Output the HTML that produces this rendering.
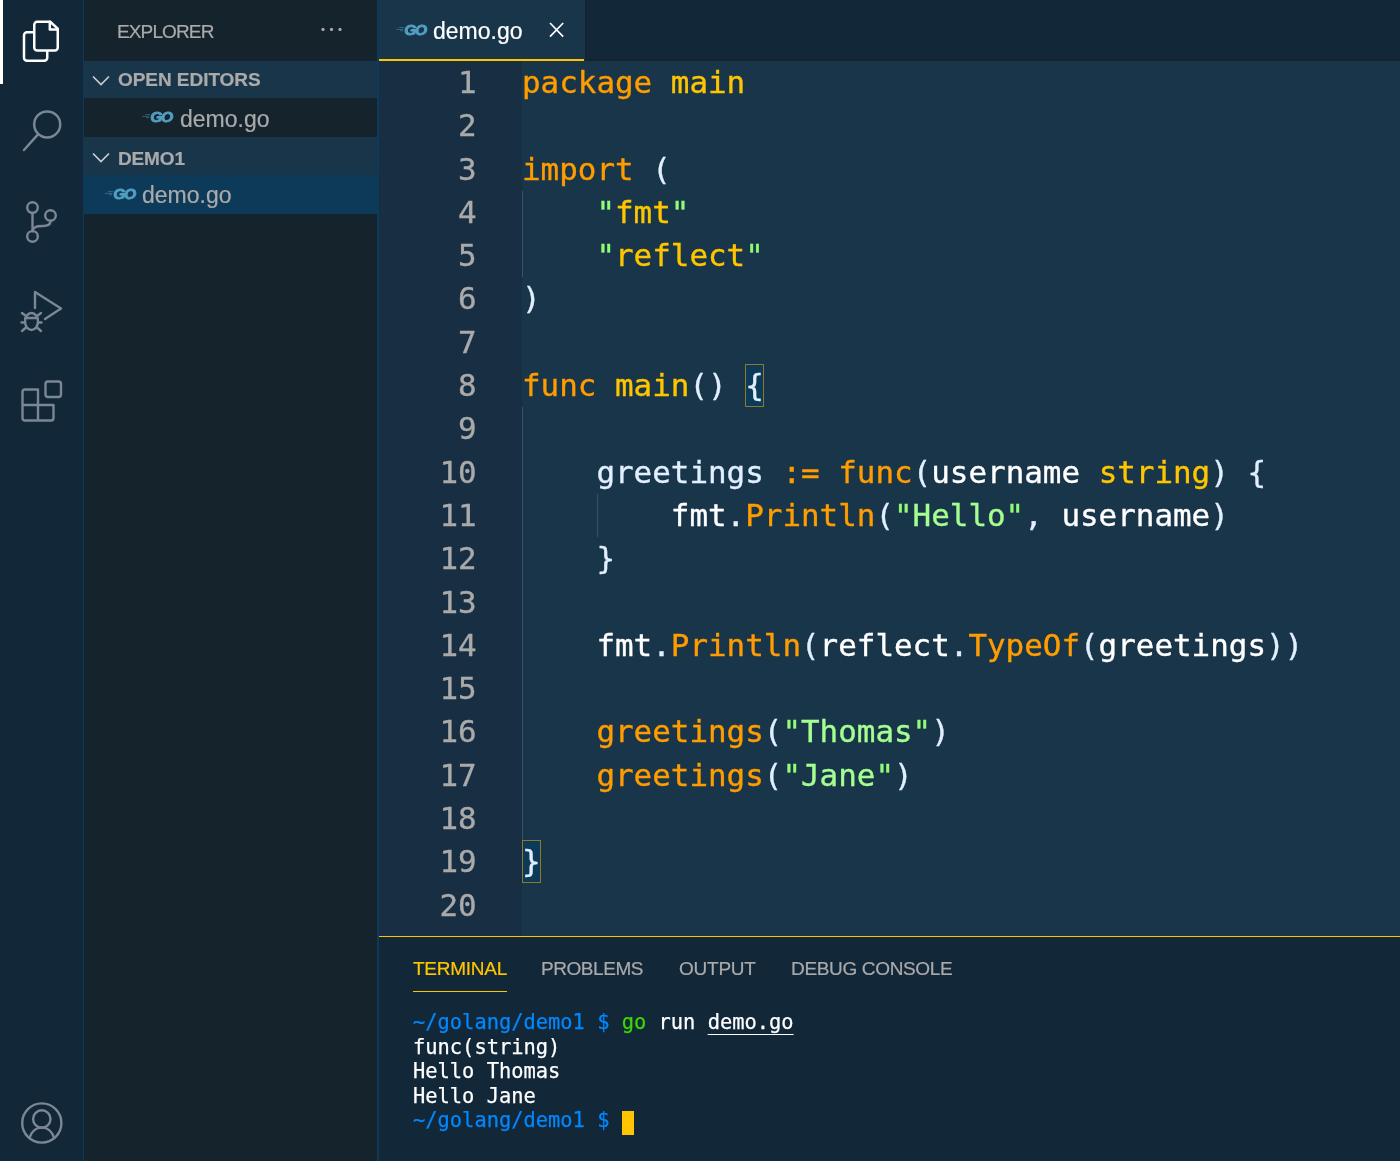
<!DOCTYPE html>
<html lang="en">
<head>
<meta charset="utf-8">
<title>demo.go — demo1</title>
<style>
*{box-sizing:border-box;margin:0;padding:0}
html,body{width:1400px;height:1161px;overflow:hidden;background:#193549}
body{position:relative;font-family:"Liberation Sans",sans-serif;color:#aaa;-webkit-font-smoothing:antialiased}
.abs{position:absolute}
/* activity bar */
#activity{position:absolute;left:0;top:0;width:84px;height:1161px;background:#122738;border-right:1.7px solid #0d3a58}
#activity .active{position:absolute;left:0;top:0;width:3px;height:84px;background:#fff}
#activity svg{position:absolute;left:0;top:0;overflow:visible}
/* sidebar */
#sidebar{position:absolute;left:84px;top:0;width:295px;height:1161px;background:#15232d;border-right:2px solid #0d3a58;z-index:2}
#sidebar .title{position:absolute;left:33.3px;top:19.5px;font-size:19px;line-height:24px;color:#aaa;letter-spacing:-0.87px;white-space:nowrap}
#sidebar .hdr{position:absolute;left:0;width:293px;height:37px;background:#193549}
#sidebar .hdr span{position:absolute;left:34.3px;top:7.2px;font-size:19px;line-height:24px;font-weight:bold;color:#aaa;letter-spacing:-0.05px;white-space:nowrap}
#sidebar .row{position:absolute;left:0;width:293px;height:38px}
#sidebar .row .fn{position:absolute;top:5.4px;font-size:23px;line-height:28px;color:#aaa;white-space:nowrap}
#sidebar .row.sel{background:#0d3a58}
svg.goicon{position:absolute;overflow:visible}
/* editor */
#tabs{position:absolute;left:378px;top:0;width:1022px;height:61px;background:#122738;border-bottom:2.2px solid #15232d}
#tab{position:absolute;left:0;top:0;width:209px;height:61px;background:#193549;border-right:2px solid #15232d}
#tab .yl{position:absolute;left:1px;top:58.9px;width:205.2px;height:2.2px;background:#ffc600}
#tab .fn{position:absolute;left:54.9px;top:17.2px;font-size:23px;line-height:28px;color:#fff;white-space:nowrap}
#editor{position:absolute;left:378px;top:61px;width:1022px;height:875px;background:#193549;overflow:hidden}
#gutter{position:absolute;left:0;top:0;width:144px;height:875px;background:#172e43}
.ln{position:absolute;left:0;width:98.6px;text-align:right;color:#aaa}
.ln,.cl{font-family:"DejaVu Sans Mono","Liberation Mono",monospace;font-size:30.9px;-webkit-text-stroke-width:0.35px;line-height:43.3px;height:43.3px;white-space:pre}
.cl{position:absolute;left:144px;color:#fff}
.ln,.cl{margin-top:-0.1px}
.k{color:#ff9d00}.y{color:#ffc600}.p{color:#e1efff}.s{color:#a5ff90}.q{color:#92fc79}.w{color:#fff}
.guide{position:absolute;width:1px;background:#3a5163}
.bm{position:absolute;width:18.6px;height:43px;background:#0d3a58;border:1.5px solid #8a7a2c}
.ln,.cl,.tl,.pt,.fn,.title,.hdr span,svg.goicon{will-change:transform}
.pt,.fn,.title,.hdr span{-webkit-text-stroke-width:0.2px}
/* panel */
#panel{position:absolute;left:378px;top:936px;width:1022px;height:225px;background:#122738;border-top:1.7px solid #ffc600}
#panel .pt{position:absolute;top:20.2px;font-size:19px;line-height:24px;color:#aaa;white-space:nowrap}
#panel .pt.on{color:#ffc600}
#panel .ul{position:absolute;left:35px;top:53.5px;width:94px;height:1.7px;background:#ffc600}
.tl{position:absolute;left:35px;font-family:"DejaVu Sans Mono","Liberation Mono",monospace;font-size:20.4px;line-height:24.5px;height:24.5px;color:#fff;white-space:pre;-webkit-text-stroke-width:0.25px;margin-top:0.4px}
.b{color:#0088ff}.g{color:#3ad900}
.cur{position:absolute;left:244px;top:173.5px;width:12px;height:24px;background:#ffc600}
</style>
</head>
<body>

<div id="activity">
  <div class="active"></div>
  <svg width="84" height="1161" viewBox="0 0 84 1161" fill="none" stroke-linecap="round" stroke-linejoin="round">
    <!-- files -->
    <g stroke="#fff" stroke-width="2.5">
      <path d="M33 32.25H27a3 3 0 0 0-3 3V57.75a3 3 0 0 0 3 3H44.25a3 3 0 0 0 3-3V51.7"/>
      <path d="M37.25 21.75H50.2L57.75 28.6V47.45a3 3 0 0 1-3 3H37.25a3 3 0 0 1-3-3V24.75a3 3 0 0 1 3-3Z"/>
      <path d="M49.8 21.75V29.6H57.75"/>
    </g>
    <!-- search -->
    <g stroke="#7b8794" stroke-width="2.5">
      <circle cx="47.2" cy="124.4" r="13"/>
      <path d="M38 134.4L24 150"/>
    </g>
    <!-- source control -->
    <g stroke="#7b8794" stroke-width="2.4">
      <circle cx="32.5" cy="207.6" r="5.3"/>
      <circle cx="32.5" cy="236.4" r="5.3"/>
      <circle cx="50.5" cy="215.5" r="5.3"/>
      <path d="M32.5 213V231"/>
      <path d="M50.5 221C50.500 225.500 46 226 43 226S37 226 35.500 227S32.500 229 32.500 231"/>
    </g>
    <!-- debug -->
    <g stroke="#7b8794" stroke-width="2.4">
      <path d="M35 308V292L61 308.5L45 319"/>
      <ellipse cx="31.5" cy="321.5" rx="6.5" ry="8.5"/>
      <path d="M25.5 318H37.5M21.5 322.5H25M38 322.5H41.5M22 313l4 3M41 313l-4 3M22 331l4-3.5M41 331l-4-3.5"/>
    </g>
    <!-- extensions -->
    <g stroke="#7b8794" stroke-width="2.4">
      <rect x="45.5" y="381.5" width="15.5" height="15.5" rx="2.5"/>
      <path d="M38 389.5H25a2.5 2.5 0 0 0-2.5 2.5V418a2.5 2.5 0 0 0 2.5 2.5H51a2.5 2.5 0 0 0 2.5-2.5V405H22.5M38 389.5V420.5M38 389.5"/>
    </g>
    <!-- account -->
    <g stroke="#7b8794" stroke-width="2.4">
      <circle cx="41.8" cy="1123" r="19.6"/>
      <circle cx="41.8" cy="1119" r="8.7"/>
      <path d="M29.5 1138c2-7 7-10.5 12.3-10.5s10.3 3.500 12.300 10.500"/>
    </g>
  </svg>
</div>

<div id="sidebar">
  <div class="title">EXPLORER</div>
  <svg class="abs" style="left:236px;top:24px" width="24" height="10" viewBox="0 0 24 10"><circle cx="3" cy="5.4" r="1.6" fill="#aaa"/><circle cx="11.5" cy="5.400" r="1.600" fill="#aaa"/><circle cx="20" cy="5.40" r="1.60" fill="#aaa"/></svg>

  <div class="hdr" style="top:61px"><svg class="abs" style="left:8px;top:14px" width="18" height="12" viewBox="0 0 18 12" fill="none" stroke="#ccc" stroke-width="1.7"><path d="M1 1.500L9 9.500L17 1.500"/></svg><span>OPEN EDITORS</span></div>
  <div class="row" style="top:98px">
    <svg class="goicon" style="left:57.400px;top:10.900px" width="34" height="16" viewBox="0 0 34 16"><text transform="translate(9.300 13.100) scale(1.080 1)" font-family="Liberation Sans, sans-serif" font-size="14.500" font-weight="bold" font-style="italic" fill="#529fc2" stroke="#529fc2" stroke-width="0.850" stroke-linejoin="round" letter-spacing="-1.400">GO</text><path d="M4 5.600H9.200M1 7.400H8.300M5 8.700H8" stroke="#529fc2" stroke-width="0.800" opacity="0.600"/></svg>
    <span class="fn" style="left:95.800px;top:6.600px">demo.go</span>
  </div>
  <div class="hdr" style="top:137px;height:38px"><svg class="abs" style="left:8px;top:15px" width="18" height="12" viewBox="0 0 18 12" fill="none" stroke="#ccc" stroke-width="1.7"><path d="M1 1.500L9 9.500L17 1.500"/></svg><span style="top:9.600px;left:33.800px;letter-spacing:-0.15px">DEMO1</span></div>
  <div class="row sel" style="top:175px;height:38.800px">
    <svg class="goicon" style="left:19.800px;top:11.200px" width="34" height="16" viewBox="0 0 34 16"><text transform="translate(9.300 13.100) scale(1.080 1)" font-family="Liberation Sans, sans-serif" font-size="14.500" font-weight="bold" font-style="italic" fill="#529fc2" stroke="#529fc2" stroke-width="0.850" stroke-linejoin="round" letter-spacing="-1.400">GO</text><path d="M4 5.600H9.200M1 7.400H8.300M5 8.700H8" stroke="#529fc2" stroke-width="0.800" opacity="0.600"/></svg>
    <span class="fn" style="left:58.100px;top:5.700px">demo.go</span>
  </div>
</div>

<div id="tabs">
  <div id="tab">
    <div class="yl"></div>
    <svg class="goicon" style="left:16.900px;top:22px" width="34" height="16" viewBox="0 0 34 16"><text transform="translate(9.300 13.100) scale(1.080 1)" font-family="Liberation Sans, sans-serif" font-size="14.500" font-weight="bold" font-style="italic" fill="#529fc2" stroke="#529fc2" stroke-width="0.850" stroke-linejoin="round" letter-spacing="-1.400">GO</text><path d="M4 5.600H9.200M1 7.400H8.300M5 8.700H8" stroke="#529fc2" stroke-width="0.800" opacity="0.600"/></svg>
    <span class="fn">demo.go</span>
    <svg class="abs" style="left:171.200px;top:21.600px" width="16" height="16" viewBox="0 0 16 16" fill="none" stroke="#fff" stroke-width="1.700"><path d="M1 1L14.200 14.700M14.200 1L1 14.700"/></svg>
  </div>
</div>

<div id="editor">
  <div id="gutter"></div>
  <!-- LINES -->
  <div class="guide" style="left:144px;top:129.9px;height:86.6px"></div>
  <div class="guide" style="left:144px;top:346.4px;height:433.0px"></div>
  <div class="guide" style="left:218.600px;top:433.0px;height:43.3px"></div>
  <div class="bm" style="left:367.2px;top:303.1px"></div>
  <div class="bm" style="left:144px;top:779.4px"></div>
  <div class="ln" style="top:0.0px">1</div>
  <div class="cl" style="top:0.0px"><span class="k">package</span> <span class="y">main</span></div>
  <div class="ln" style="top:43.3px">2</div>
  <div class="ln" style="top:86.6px">3</div>
  <div class="cl" style="top:86.6px"><span class="k">import</span> <span class="p">(</span></div>
  <div class="ln" style="top:129.9px">4</div>
  <div class="cl" style="top:129.9px">    <span class="q">&quot;</span><span class="y">fmt</span><span class="q">&quot;</span></div>
  <div class="ln" style="top:173.2px">5</div>
  <div class="cl" style="top:173.2px">    <span class="q">&quot;</span><span class="y">reflect</span><span class="q">&quot;</span></div>
  <div class="ln" style="top:216.5px">6</div>
  <div class="cl" style="top:216.5px"><span class="p">)</span></div>
  <div class="ln" style="top:259.8px">7</div>
  <div class="ln" style="top:303.1px">8</div>
  <div class="cl" style="top:303.1px"><span class="k">func</span> <span class="y">main</span><span class="p">()</span> <span class="p">{</span></div>
  <div class="ln" style="top:346.4px">9</div>
  <div class="ln" style="top:389.7px">10</div>
  <div class="cl" style="top:389.7px">    <span class="p">greetings</span> <span class="k">:=</span> <span class="k">func</span><span class="p">(</span>username <span class="y">string</span><span class="p">)</span> <span class="p">{</span></div>
  <div class="ln" style="top:433.0px">11</div>
  <div class="cl" style="top:433.0px">        fmt<span class="p">.</span><span class="k">Println</span><span class="p">(</span><span class="q">&quot;</span><span class="s">Hello</span><span class="q">&quot;</span><span class="p">,</span> username<span class="p">)</span></div>
  <div class="ln" style="top:476.3px">12</div>
  <div class="cl" style="top:476.3px">    <span class="p">}</span></div>
  <div class="ln" style="top:519.6px">13</div>
  <div class="ln" style="top:562.9px">14</div>
  <div class="cl" style="top:562.9px">    fmt<span class="p">.</span><span class="k">Println</span><span class="p">(</span>reflect<span class="p">.</span><span class="k">TypeOf</span><span class="p">(</span>greetings<span class="p">))</span></div>
  <div class="ln" style="top:606.2px">15</div>
  <div class="ln" style="top:649.5px">16</div>
  <div class="cl" style="top:649.5px">    <span class="k">greetings</span><span class="p">(</span><span class="q">&quot;</span><span class="s">Thomas</span><span class="q">&quot;</span><span class="p">)</span></div>
  <div class="ln" style="top:692.8px">17</div>
  <div class="cl" style="top:692.8px">    <span class="k">greetings</span><span class="p">(</span><span class="q">&quot;</span><span class="s">Jane</span><span class="q">&quot;</span><span class="p">)</span></div>
  <div class="ln" style="top:736.1px">18</div>
  <div class="ln" style="top:779.4px">19</div>
  <div class="cl" style="top:779.4px"><span class="p">}</span></div>
  <div class="ln" style="top:822.7px">20</div>
  <!-- /LINES -->
</div>

<div id="panel">
  <span class="pt on" style="left:35px;letter-spacing:-0.25px">TERMINAL</span>
  <span class="pt" style="left:163.250px;letter-spacing:-0.45px">PROBLEMS</span>
  <span class="pt" style="left:300.700px;letter-spacing:-0.24px">OUTPUT</span>
  <span class="pt" style="left:413.100px;letter-spacing:-0.34px">DEBUG CONSOLE</span>
  <div class="ul"></div>
  <div class="tl" style="top:73px"><span class="b">~/golang/demo1 $</span> <span class="g">go</span> run <span style="text-decoration:underline;text-decoration-skip-ink:none;text-underline-offset:4.500px;text-decoration-thickness:1.300px">demo.go</span></div>
  <div class="tl" style="top:97.500px">func(string)</div>
  <div class="tl" style="top:122px">Hello Thomas</div>
  <div class="tl" style="top:146.500px">Hello Jane</div>
  <div class="tl" style="top:171px"><span class="b">~/golang/demo1 $</span> </div>
  <div class="cur"></div>
</div>

</body>
</html>
